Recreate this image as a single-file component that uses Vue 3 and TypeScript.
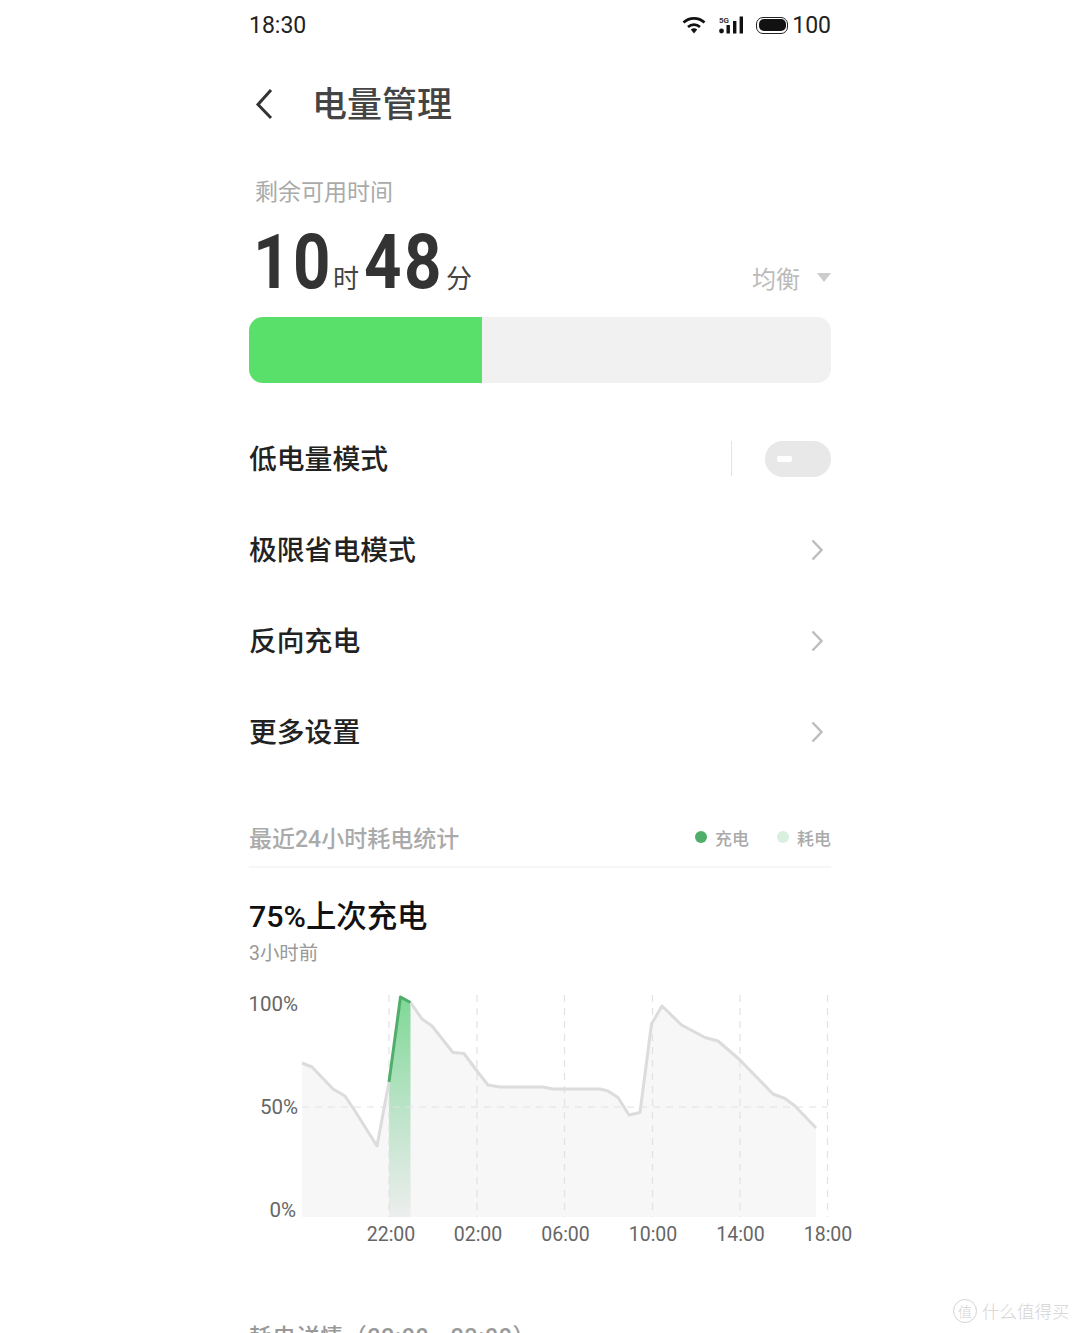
<script setup lang="ts">
const rows = ['极限省电模式', '反向充电', '更多设置']

const grid = [389, 477, 564.5, 652.5, 740, 827.5]
const hours = [
  { x: 391, t: '22:00' },
  { x: 478, t: '02:00' },
  { x: 565.5, t: '06:00' },
  { x: 653, t: '10:00' },
  { x: 740.5, t: '14:00' },
  { x: 828, t: '18:00' },
]

const before = '302,1062 312,1066 333,1088 345,1095 355,1110 377,1145 389,1081'
const charge = '389,1081 400.5,996 410.5,1001.5'
const after =
  '410.5,1001.5 422,1018 432,1025 453,1051.5 464,1052.5 477,1070 488,1084 500,1086 543,1086 553,1088 600,1088 608,1090 618,1096.5 629,1114 640,1111.5 651.5,1023 662,1005 681.5,1024 705,1036.5 718,1040 740,1059 773,1093 785,1097.5 795,1105 816,1127'
const area = `${before} ${charge} ${after} 816,1216 302,1216`
</script>

<template>
  <div class="page">
    <div class="status">
      <span class="clock">18:30</span>
      <div class="status-right">
        <svg class="wifi" width="24" height="18" viewBox="0 0 24 18">
          <path d="M1.5 6.5C7.5 1 16.5 1 22.5 6.5" fill="none" stroke="#111" stroke-width="2.6" />
          <path d="M6 11C9.5 7.8 14.5 7.8 18 11" fill="none" stroke="#111" stroke-width="2.6" />
          <path d="M8.8 13.4 12 17.5 15.2 13.4C13.4 12 10.6 12 8.8 13.4Z" fill="#111" />
        </svg>
        <svg class="signal" width="26" height="18" viewBox="0 0 26 18">
          <text x="0" y="7" class="five-g">5G</text>
          <circle cx="2.5" cy="15" r="2.4" fill="#111" />
          <rect x="7.5" y="9" width="3.4" height="8.5" fill="#111" />
          <rect x="14" y="5" width="3.4" height="12.5" fill="#111" />
          <rect x="20.6" y="0.5" width="3.4" height="17" fill="#111" />
        </svg>
        <div class="battery"><div class="battery-fill"></div></div>
        <span class="level">100</span>
      </div>
    </div>

    <div class="header">
      <svg width="18" height="32" viewBox="0 0 18 32">
        <path d="M16 2 3 16.5 16 30" fill="none" stroke="#333" stroke-width="3" />
      </svg>
      <h1>电量管理</h1>
    </div>

    <div class="remain-label">剩余可用时间</div>
    <div class="remain">
      <span class="num ten">10</span>
      <span class="unit hour">时</span>
      <span class="num">48</span>
      <span class="unit">分</span>
      <div class="mode">
        <span>均衡</span>
        <i class="triangle"></i>
      </div>
    </div>

    <div class="bar"><div class="bar-fill" style="width: 40%"></div></div>

    <div class="row first">
      <span class="row-text">低电量模式</span>
      <div class="switch-wrap">
        <i class="row-divider"></i>
        <div class="switch"><i></i></div>
      </div>
    </div>
    <div class="row" v-for="row in rows" :key="row">
      <span class="row-text">{{ row }}</span>
      <svg width="12" height="22" viewBox="0 0 12 22">
        <path d="M1.5 1.5 10.5 11 1.5 20.5" fill="none" stroke="#bdbdbd" stroke-width="2.4" />
      </svg>
    </div>

    <div class="stats-head">
      <span class="stats-title">最近24小时耗电统计</span>
      <div class="legend">
        <i class="dot green"></i><span>充电</span>
        <i class="dot pale"></i><span>耗电</span>
      </div>
    </div>

    <div class="last">75%上次充电</div>
    <div class="ago">3小时前</div>

    <svg class="chart" width="610" height="262" viewBox="249 985 610 262">
      <defs>
        <linearGradient id="charge" x1="0" y1="0" x2="0" y2="1">
          <stop offset="0" stop-color="#7fd896" />
          <stop offset="0.55" stop-color="#bfe4cb" />
          <stop offset="1" stop-color="#eceeed" />
        </linearGradient>
      </defs>
      <polygon :points="area" fill="#f7f7f7" />
      <polygon points="389,1081 400.5,996 410.5,1001.5 410.5,1216 389,1216" fill="url(#charge)" />
      <line
        v-for="x in grid"
        :key="x"
        :x1="x"
        :x2="x"
        y1="994"
        y2="1216"
        class="grid-line"
      />
      <line x1="302" x2="827" y1="1106" y2="1106" class="grid-line" />
      <polyline :points="before" class="line" />
      <polyline :points="after" class="line" />
      <polyline :points="charge" class="line charge" />
      <text x="298" y="1009.5" class="axis percent" text-anchor="end">100%</text>
      <text x="298" y="1112.5" class="axis percent" text-anchor="end">50%</text>
      <text x="296" y="1215.5" class="axis percent" text-anchor="end">0%</text>
      <text v-for="h in hours" :key="h.t" :x="h.x" y="1240" class="axis" text-anchor="middle">{{ h.t }}</text>
    </svg>

    <div class="detail">耗电详情（22:00 - 23:00）</div>
  </div>

  <div class="mark">
    <span class="mark-logo">值</span>
    <span>什么值得买</span>
  </div>
</template>

<style>
html,
body {
  background: #fff;
}
</style>

<style scoped>
.page {
  box-sizing: border-box;
  width: 1080px;
  height: 1333px;
  padding: 0 249px;
  overflow: hidden;
  font-family: Roboto, "Noto Sans CJK SC", sans-serif;
  color: #222;
}

.status {
  display: flex;
  align-items: center;
  justify-content: space-between;
  height: 50px;
}

.clock,
.level {
  font-size: 23px;
  color: #222;
}

.status-right {
  display: flex;
  align-items: center;
}

.wifi {
  margin-right: 13px;
}

.signal {
  margin-right: 11px;
}

.five-g {
  font-size: 8px;
  font-weight: 700;
  fill: #333;
}

.battery {
  width: 32px;
  height: 17px;
  box-sizing: border-box;
  border: 1.5px solid #222;
  border-radius: 7px;
  padding: 1.5px;
  margin-right: 4px;
}

.battery-fill {
  height: 100%;
  background: #111;
  border-radius: 5px;
}

.header {
  display: flex;
  align-items: center;
  height: 108px;
  padding-left: 6px;
}

.header h1 {
  margin: 0 0 6px 39px;
  font-size: 35px;
  font-weight: 500;
  color: #444;
}

.remain-label {
  margin: 18px 0 0 6px;
  font-size: 23px;
  line-height: 34px;
  color: #aaa;
}

.remain {
  display: flex;
  align-items: baseline;
  height: 84px;
  margin-top: 10px;
  padding-left: 4px;
}

.num {
  display: inline-block;
  width: 78px;
  font-size: 76px;
  line-height: 84px;
  font-weight: 700;
  color: #333;
  letter-spacing: 3px;
  transform: scaleX(0.86);
  transform-origin: left center;
}

.ten {
  width: 80px;
}

.unit {
  width: 26px;
  margin-left: 4px;
  font-size: 26px;
  color: #444;
}

.hour {
  margin-right: 5px;
  margin-left: 0;
}

.mode {
  display: flex;
  align-items: center;
  margin-left: auto;
  font-size: 24px;
  color: #bbb;
}

.triangle {
  width: 0;
  height: 0;
  margin-left: 17px;
  border-left: 7px solid transparent;
  border-right: 7px solid transparent;
  border-top: 9px solid #ccc;
}

.bar {
  height: 66px;
  margin-top: 13px;
  border-radius: 14px;
  background: #f1f1f1;
  overflow: hidden;
}

.bar-fill {
  height: 100%;
  background: #58e06a;
}

.row {
  display: flex;
  align-items: center;
  justify-content: space-between;
  height: 91px;
  padding-right: 8px;
  font-size: 27.8px;
  font-weight: 500;
  color: #222;
}

.row-text {
  padding-bottom: 4px;
}

.row.first {
  margin-top: 30px;
  padding-right: 0;
}

.switch-wrap {
  display: flex;
  align-items: center;
}

.row-divider {
  width: 1px;
  height: 35px;
  margin-right: 33px;
  background: #e3e3e3;
}

.switch {
  display: flex;
  align-items: center;
  width: 66px;
  height: 36px;
  padding-left: 12px;
  box-sizing: border-box;
  border-radius: 18px;
  background: #e8e8e8;
}

.switch i {
  width: 15px;
  height: 6px;
  border-radius: 2px;
  background: #fff;
}

.stats-head {
  display: flex;
  align-items: center;
  justify-content: space-between;
  height: 58px;
  margin-top: 31px;
  border-bottom: 2px solid #f6f6f6;
}

.stats-title {
  font-size: 23px;
  font-weight: 500;
  color: #aaa;
}

.legend {
  display: flex;
  align-items: center;
  font-size: 17px;
  font-weight: 500;
  color: #aaa;
}

.dot {
  width: 12px;
  height: 12px;
  border-radius: 50%;
  margin-right: 8px;
}

.green {
  background: #4fae6a;
}

.pale {
  margin-left: 28px;
  background: #d9efe0;
}

.last {
  margin-top: 27px;
  font-size: 30.4px;
  line-height: 44px;
  font-weight: 500;
  color: #111;
}

.ago {
  margin-top: 1px;
  font-size: 19.4px;
  line-height: 28px;
  color: #999;
}

.chart {
  display: block;
  margin-top: 18px;
  overflow: visible;
}

.grid-line {
  stroke: #e2e2e2;
  stroke-width: 1.2;
  stroke-dasharray: 7 6;
}

.line {
  fill: none;
  stroke: #dcdcdc;
  stroke-width: 3;
  stroke-linejoin: round;
}

.charge {
  stroke: #4fae6a;
}

.axis {
  font-size: 19.5px;
  fill: #666;
}

.percent {
  font-size: 20.5px;
}

.detail {
  margin-top: 75px;
  font-size: 23px;
  line-height: 30px;
  font-weight: 500;
  letter-spacing: 0.7px;
  color: #999;
}

.mark {
  position: absolute;
  left: 953px;
  top: 1298px;
  display: flex;
  align-items: center;
  gap: 5px;
  font-family: "Noto Sans CJK SC", sans-serif;
  font-size: 17.5px;
  font-weight: 300;
  color: #d4d4d4;
}

.mark-logo {
  display: flex;
  align-items: center;
  justify-content: center;
  width: 22px;
  height: 22px;
  border: 1px solid #d4d4d4;
  border-radius: 50%;
  font-size: 14px;
}
</style>
